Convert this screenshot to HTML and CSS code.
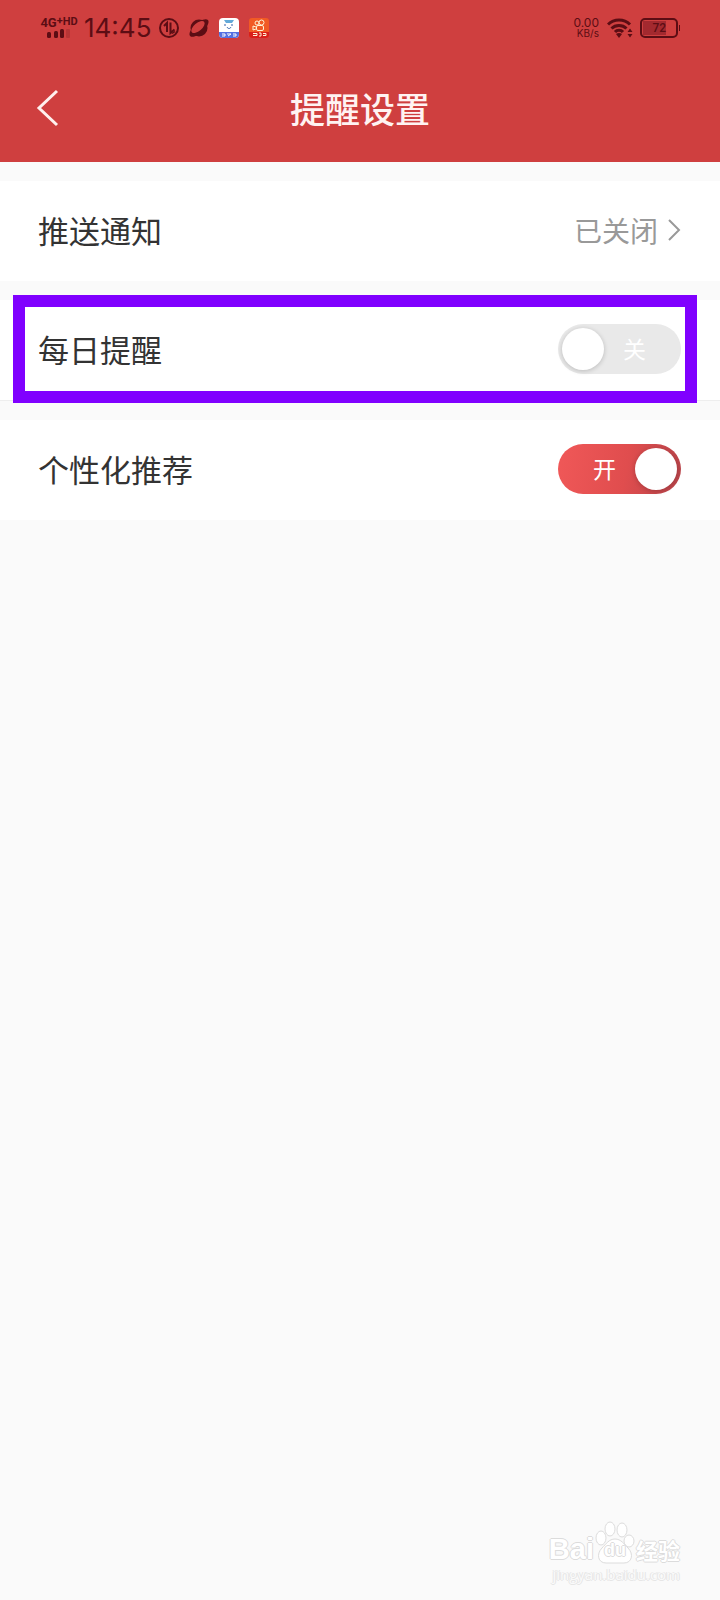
FILE: index.html
```html
<!DOCTYPE html>
<html lang="zh-CN">
<head>
<meta charset="utf-8">
<meta name="viewport" content="width=device-width, initial-scale=1">
<title>提醒设置</title>
<link rel="stylesheet" href="styles.css">
</head>
<body>
<header class="top">
  <div class="status">
    <div class="network">
      <span class="carrier">4G<span class="plus">+</span><span class="hd">HD</span></span>
      <svg class="bars" width="24" height="10" viewBox="0 0 24 10"><rect x="0" y="3" width="4" height="6" rx="1.5"/><rect x="7" y="2" width="4" height="7" rx="1.5"/><rect x="13" y="0" width="4" height="9" rx="1.5"/><rect x="19" y="0" width="4" height="9" rx="1" opacity=".2"/></svg>
    </div>
    <time class="clock">14:45</time>
    <div class="apps">
      <svg width="20" height="20" viewBox="0 0 20 20" fill="none" stroke="currentColor" stroke-width="2"><circle cx="10" cy="10" r="9"/><path d="M5 8l3-3v9M11.500 4.500v10.500l4-3.500"/><path d="M13 15.500l3-2" stroke-width="1.500"/></svg>
      <svg width="20" height="20" viewBox="0 0 20 20"><circle cx="10" cy="10" r="8.500" fill="currentColor"/><ellipse cx="10" cy="10" rx="12" ry="5" transform="rotate(-42 10 10)" fill="currentColor"/><ellipse cx="9" cy="9" rx="8" ry="4" transform="rotate(-40 9 9)" fill="#cf3f3f"/></svg>
      <svg width="20" height="20" viewBox="0 0 20 20"><rect width="20" height="20" rx="4" fill="#fff"/><path d="M0 14h20v2a4 4 0 0 1-4 4H4a4 4 0 0 1-4-4z" fill="#5571e3"/><path d="M5 2h10l-2 3H7z" fill="#62a9d8"/><path d="M6 6v2M13 6v2M8 9c1 2 3 2 4 0" fill="none" stroke="#315da8"/><path d="M3 16h3v2H3M8 16h4l-3 2M14 16h3v2h-3" fill="none" stroke="#fff"/></svg>
      <svg width="20" height="20" viewBox="0 0 20 20"><rect width="20" height="20" rx="3" fill="#f15a24"/><path d="M0 14h20v3a3 3 0 0 1-3 3H3a3 3 0 0 1-3-3z" fill="#d91f1a"/><g fill="none" stroke="#fff3d6"><circle cx="8" cy="5" r="2"/><circle cx="12.500" cy="4.500" r="2.500"/><rect x="7.500" y="7.500" width="7" height="5" rx="1.500"/><path d="M7 9l-3-1v4l3-1M4 15.500h4v2H4M10 15h2v3h-2M14 15.500h3v2h-3"/></g></svg>
    </div>
    <div class="speed"><span>0.00</span><span class="unit">KB/s</span></div>
    <svg class="wifi" width="26" height="20" viewBox="0 0 26 20"><g fill="none" stroke="currentColor" stroke-width="3"><path d="M1 6.500c6-6 16-6 22 0M4.500 10.500c4-4 11-4 15 0M8 14c2-2.500 6-2.500 8 0"/></g><path fill="currentColor" d="M9 16c2-1.500 4-1.500 6 0l-3 4zM20.500 14l2.500-3.500 2.500 3.500zM20.500 16l2.500 3.500 2.500-3.500z"/></svg>
    <div class="battery"><span class="charge">72</span></div>
  </div>
  <div class="navbar">
    <button class="back" type="button" aria-label="返回"><svg width="24" height="40" viewBox="0 0 24 40" fill="none" stroke="#fff0ee" stroke-width="3"><path d="M21 3L3 20l18 17"/></svg></button>
    <h1 class="title">提醒设置</h1>
  </div>
</header>
<main class="settings">
  <a class="row" href="#push">
    <span class="name">推送通知</span>
    <span class="value">已关闭</span>
    <svg class="arrow" width="13" height="22" viewBox="0 0 13 22" fill="none" stroke="#999" stroke-width="2"><path d="M1 1l10 10-10 10"/></svg>
  </a>
  <div class="row focus">
    <label class="name" for="daily">每日提醒</label>
    <span class="switch"><input class="toggle" id="daily" type="checkbox"><span class="state off">关</span></span>
  </div>
  <div class="row">
    <label class="name" for="personal">个性化推荐</label>
    <span class="switch"><input class="toggle" id="personal" type="checkbox" checked><span class="state on">开</span></span>
  </div>
</main>
<footer class="brand">
  <div class="logo">
    <span class="latin">Bai</span>
    <span class="paw">
      <svg width="40" height="43" viewBox="0 0 40 43" fill="#fff" stroke="#dcdcdc"><ellipse cx="6" cy="17" rx="5" ry="7"/><ellipse cx="15" cy="8" rx="5" ry="7"/><ellipse cx="27" cy="9" rx="5" ry="7"/><ellipse cx="34" cy="20" rx="5" ry="6"/><path d="M20 18c6 0 9 5 13 9 6 6 4 15-4 15H11c-8 0-10-9-4-15 4-4 7-9 13-9z"/></svg>
      <span class="du">du</span>
    </span>
    <span class="cn">经验</span>
  </div>
  <span class="site">jingyan.baidu.com</span>
</footer>
</body>
</html>
```
FILE: styles.css
```css
* { box-sizing: border-box; }
body {
  margin: 0;
  min-height: 100vh;
  display: flex;
  flex-direction: column;
  background: #fafafa;
  color: #333;
  font-family: "Noto Sans CJK SC", sans-serif;
}
svg { display: block; }
.top { background: #cf3f3f; padding-bottom: 2px; }
.status {
  display: flex;
  align-items: center;
  height: 56px;
  padding: 0 42px 0 40px;
  color: #5c0d14;
  font-family: Roboto, sans-serif;
}
.network { width: 38px; display: flex; flex-direction: column; align-items: center; }
.carrier { display: flex; font-size: 13px; line-height: 12px; font-weight: 700; }
.plus { font-size: 11px; line-height: 8px; }
.hd { font-size: 11px; line-height: 9px; }
.bars { fill: currentColor; }
.clock { margin-left: 6px; font-family: Inter, sans-serif; font-size: 26px; line-height: 32px; }
.apps { display: flex; gap: 10px; margin-left: 8px; }
.speed {
  margin-left: auto;
  display: flex;
  flex-direction: column;
  align-items: flex-end;
  font-family: Inter, sans-serif;
  font-size: 12px;
  line-height: 11px;
}
.unit { font-size: 10px; }
.wifi { margin-left: 8px; }
.battery {
  position: relative;
  width: 38px;
  height: 20px;
  margin-left: 7px;
  padding: 1px;
  border: 2px solid currentColor;
  border-radius: 5px;
}
.battery::after {
  content: "";
  position: absolute;
  right: -4px;
  top: 5px;
  width: 1px;
  height: 6px;
  background: currentColor;
}
.charge {
  display: block;
  width: 72%;
  height: 14px;
  background: #a3292f;
  font-family: Roboto, sans-serif;
  font-size: 12px;
  line-height: 14px;
  font-weight: 500;
  text-align: right;
}
.navbar {
  display: grid;
  grid-template-columns: 60px 1fr 60px;
  align-items: center;
  height: 104px;
  padding: 0 36px;
}
.back { justify-self: start; padding: 0; border: 0; background: none; }
.title {
  margin: 0;
  color: #fff3f2;
  font-size: 35px;
  line-height: 52px;
  font-weight: 500;
  text-align: center;
}
.settings { display: flex; flex-direction: column; gap: 19px; padding-top: 19px; }
.row {
  position: relative;
  display: flex;
  align-items: center;
  min-height: 100px;
  padding: 0 39px 2px 38px;
  background: #fff;
  color: inherit;
  text-decoration: none;
}
.name { flex: 1; font-size: 31px; line-height: 44px; }
.value { color: #999; font-size: 28px; line-height: 40px; }
.arrow { margin-left: 10px; }
.focus { min-height: 101px; border-bottom: 1px solid #eee; }
.focus::after {
  content: "";
  position: absolute;
  inset: -5px 23px -3px 13px;
  border: 12px solid #8000ff;
  pointer-events: none;
}
.switch { position: relative; display: flex; }
.toggle {
  appearance: none;
  display: flex;
  align-items: center;
  width: 123px;
  height: 50px;
  margin: 0;
  padding: 0 4px;
  border-radius: 25px;
  background: #e9e9e9;
}
.toggle::before {
  content: "";
  width: 42px;
  height: 42px;
  border-radius: 50%;
  background: #fff;
  box-shadow: 0 1px 5px #0003;
}
.toggle:checked {
  justify-content: flex-end;
  background: linear-gradient(100deg, #f05858, #e04d4e 55%, #b8444a);
}
.state {
  position: absolute;
  top: 7px;
  color: #fff;
  font-size: 23px;
  line-height: 34px;
  font-weight: 400;
  pointer-events: none;
}
.off { right: 35px; }
.on { left: 35px; }
.brand {
  display: flex;
  flex-direction: column;
  align-items: flex-end;
  margin-top: auto;
  padding: 0 40px 16px;
  color: #fff;
  text-shadow: 1px 0 #dcdcdc, -1px 0 #dcdcdc, 0 1px #dcdcdc, 0 -1px #dcdcdc;
}
.logo { display: flex; align-items: flex-end; gap: 1px; }
.latin { font: 700 29px/30px "Liberation Sans", sans-serif; }
.paw { position: relative; }
.du {
  position: absolute;
  left: 0;
  right: 0;
  bottom: 4px;
  text-align: center;
  font: 700 18px/20px "Liberation Sans", sans-serif;
}
.cn { font-size: 22px; line-height: 30px; font-weight: 700; }
.site {
  color: #fafafa;
  font: 15px/20px "Open Sans", sans-serif;
  text-shadow: 1px 0 #e6e6e6, -1px 0 #e6e6e6, 0 1px #e6e6e6;
}
```
